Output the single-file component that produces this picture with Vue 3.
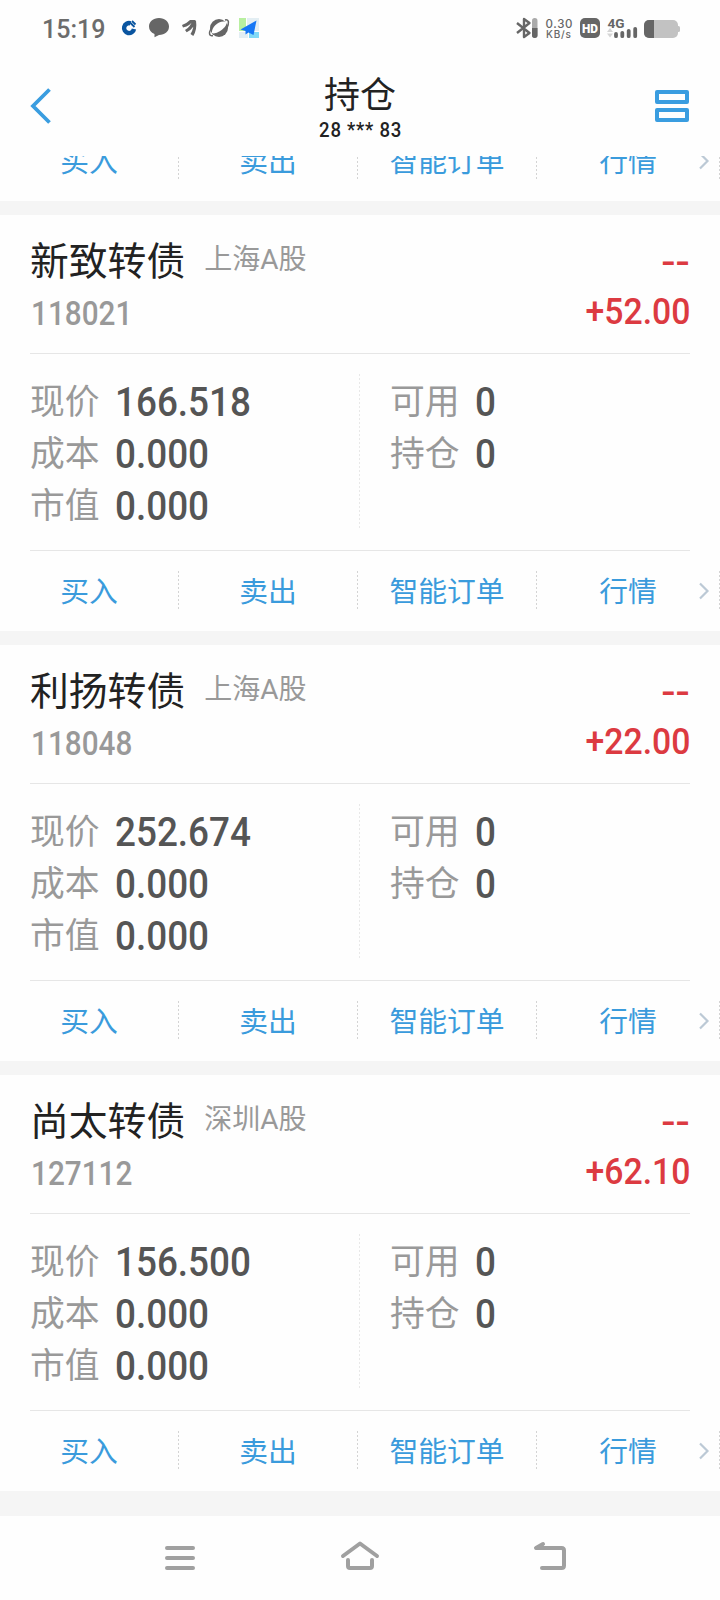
<script setup>
const actions = ['买入', '卖出', '智能订单', '行情']
const holdings = [
  { name: '新致转债', market: '上海A股', code: '118021', profit: '+52.00', price: '166.518' },
  { name: '利扬转债', market: '上海A股', code: '118048', profit: '+22.00', price: '252.674' },
  { name: '尚太转债', market: '深圳A股', code: '127112', profit: '+62.10', price: '156.500' },
]
const cards = [{ id: 'previous' }, ...holdings.map((h) => ({ ...h, id: h.code }))]
</script>

<template>
  <div class="screen">
    <div class="status">
      <span class="clock">15:19</span>
      <svg class="apps" width="150" height="24" viewBox="115 16 150 24">
        <path d="M130.500 23.300A5 5 0 1 0 134 29" fill="none" stroke="#0a55a0" stroke-width="4.400" />
        <path d="M129.500 22l5 5M132 21l3.500 3.500" stroke="#0a55a0" stroke-width="1.800" />
        <path d="M159 18c6 0 10 3.700 10 8.600s-4 8.400-10 8.400l-4.500 2.300v-3.300c-3.500-1.400-5.500-4-5.500-7.400 0-4.900 4-8.600 10-8.600z" fill="#666" />
        <path d="M182 25q4.500-1.500 8-5l3 0q-2.500 6-10 7.500zM185 30q5.500-3 7.500-10l2.500 0q0 8.500-8.300 12.200zM190.500 34q3.500-5 3-13.500l2.500 0q1.300 9-2.700 15.500z" fill="#666" />
        <circle cx="219" cy="28" r="9" fill="#666" />
        <path d="M212 33C211 27 220 19.500 226 22C229 26 216 35.500 212 33z" fill="#fff" />
        <path d="M213 35.500c-4.500 1-4-3-2-7M225 20c4.500-1 4 3.500 2 8" fill="none" stroke="#666" stroke-width="1.500" />
        <path d="M239 18h7v13h-7z" fill="#b8efa0" />
        <path d="M247 18h12v13h-12zM239 32h9v6h-9z" fill="#e3eef3" />
        <path d="M249 32h10v6h-10z" fill="#82d9f6" />
        <path d="M256.500 20.500L240.500 29.500l5 1.500v3.500l3-2 5 2.500z" fill="#1677f5" />
      </svg>
      <svg class="system" width="170" height="24" viewBox="512 16 170 24">
        <path d="M517 23l12.500 10-5.500 4V19l5.500 4L517 33" fill="none" stroke="#666" stroke-width="2.400" stroke-linejoin="round" />
        <rect x="532" y="18" width="5.500" height="20" rx="2.700" fill="#aaa" />
        <path d="M532 28h5.500v7.300a2.700 2.700 0 0 1-5.500 0z" fill="#666" />
        <text x="545.500" y="27.500" class="rate" textLength="27">0.30</text>
        <text x="546" y="37.500" class="unit" textLength="25">KB/s</text>
        <rect x="580" y="18" width="20" height="20" rx="5" fill="#666" />
        <text x="582" y="32.700" class="hd" textLength="16" lengthAdjust="spacingAndGlyphs">HD</text>
        <text x="607.500" y="28" class="net" textLength="17" lengthAdjust="spacingAndGlyphs">4G</text>
        <path d="M607 32l3-4 3 4zM607 33.500l3 4 3-4z" fill="#d5d5d5" />
        <path d="M616 34v2.200M622.300 32.800v3.400M628.700 30.800v5.400M635.200 28.800v7.400" stroke="#666" stroke-width="3.800" stroke-linecap="round" />
        <rect x="644" y="20" width="34" height="18" rx="5" fill="#c2c2c2" />
        <path d="M677 26h1.500q1.500 0 1.500 1.500v3q0 1.500-1.500 1.500h-1.500z" fill="#c2c2c2" />
        <path d="M654 20v18h-5a5 5 0 0 1-5-5v-8a5 5 0 0 1 5-5z" fill="#666" />
      </svg>
    </div>

    <header class="header">
      <svg class="back" width="24" height="40" viewBox="0 0 24 40">
        <path d="M20.500 3.500L4 20 20.500 36.500" fill="none" stroke="#3a9de0" stroke-width="3.800" />
      </svg>
      <div class="heading">
        <h1>持仓</h1>
        <div class="account"><span class="din">28 *** 83</span></div>
      </div>
      <svg class="layout" width="34" height="32" viewBox="0 0 34 32">
        <path d="M2 2h30v10H2zM2 20h30v10H2z" fill="none" stroke="#3a9de0" stroke-width="4" stroke-linejoin="round" />
      </svg>
    </header>

    <main class="list">
      <section v-for="card in cards" :key="card.id" class="card">
        <template v-if="card.code">
          <div class="top">
            <div class="left">
              <div class="name-row">
                <span class="name">{{ card.name }}</span>
                <span class="market">{{ card.market }}</span>
              </div>
              <div class="code"><span class="din">{{ card.code }}</span></div>
            </div>
            <div class="right">
              <div class="rateval"><span class="din end dashes">--</span></div>
              <div class="profit"><span class="din end">{{ card.profit }}</span></div>
            </div>
          </div>
          <div class="body">
            <dl class="col">
              <div><dt>现价</dt><dd class="din">{{ card.price }}</dd></div>
              <div><dt>成本</dt><dd class="din">0.000</dd></div>
              <div><dt>市值</dt><dd class="din">0.000</dd></div>
            </dl>
            <svg class="rule" width="1" height="156"><path d="M.5 0v156" stroke="#e8e8e8" stroke-dasharray="2 2" /></svg>
            <dl class="col second">
              <div><dt>可用</dt><dd class="din">0</dd></div>
              <div><dt>持仓</dt><dd class="din">0</dd></div>
            </dl>
          </div>
        </template>
        <div class="actions">
          <div v-for="a in actions" :key="a" class="action">
            <span>{{ a }}</span>
            <svg v-if="a === '行情'" class="more" width="12" height="20" viewBox="0 0 12 20">
              <path d="M2 2.500L9.500 10 2 17.500" fill="none" stroke="#bcc9d5" stroke-width="2.200" />
            </svg>
            <svg class="tick" width="1" height="38"><path d="M.5 0v38" stroke="#d4d4d4" stroke-dasharray="2 2" /></svg>
          </div>
        </div>
      </section>
    </main>

    <nav class="nav">
      <svg width="720" height="84" viewBox="0 1516 720 84" fill="none" stroke="#a0a0a0" stroke-width="4" stroke-linecap="round" stroke-linejoin="round">
        <path d="M167 1548h26M167 1558h26M167 1568h26" />
        <path d="M343 1556l17-12.500 17 12.500M348 1560v6q0 2 2 2h20q2 0 2-2v-6" />
        <path d="M543 1544l-7 4h25.500q2.500 0 2.500 2.500v15q0 2.500-2.500 2.500h-19.500" />
      </svg>
    </nav>
  </div>
</template>

<style>
body { margin: 0; background: #fff; }
</style>

<style scoped>
.screen {
  width: 720px;
  height: 1600px;
  overflow: hidden;
  display: flex;
  flex-direction: column;
  background: #fefefe;
  font-family: "Noto Sans CJK SC", sans-serif;
}
.din {
  display: inline-block;
  font-family: Roboto, sans-serif;
  transform: scaleX(0.91);
  transform-origin: left center;
  white-space: nowrap;
}
.end { transform: scaleX(0.925); transform-origin: right center; }
.status { height: 56px; flex: none; display: flex; align-items: flex-start; }
.clock {
  width: 74px;
  margin-left: 42px;
  margin-top: 15px;
  font: 500 25px/30px Roboto, sans-serif;
  color: #6c6c6c;
}
.apps { margin-top: 16px; margin-left: -1px; }
.system { margin-top: 16px; margin-left: 247px; }
.rate, .unit { font-family: Inter, sans-serif; font-size: 11.5px; font-weight: 500; fill: #666; }
.unit { font-size: 10px; }
.hd { font: 900 13px Roboto, sans-serif; fill: #fff; }
.net { font: 700 13.5px Roboto, sans-serif; fill: #666; }
.header { height: 100px; flex: none; display: flex; align-items: flex-start; }
.back { margin: 30px 0 0 29px; }
.heading { flex: 1; text-align: center; padding-left: 13px; margin-right: 1px; }
.heading h1 { margin: 11px 0 0; font-size: 36px; line-height: 50px; font-weight: 400; color: #222; }
.account { height: 24px; font-size: 20px; line-height: 24px; color: #222; padding-left: 1px; }
.account .din { transform: scaleX(0.93); transform-origin: center; font-weight: 500; letter-spacing: 0.8px; }
.layout { margin: 34px 31px 0 0; }
.list { height: 1360px; flex: none; overflow: hidden; background: #f5f5f5; display: flex; flex-direction: column; gap: 14px; }
.card { background: #fefefe; flex: none; height: 416px; }
.card:first-child { height: 45px; display: flex; align-items: flex-end; }
.top { height: 138px; margin: 0 30px; border-bottom: 1px solid #e6e6e6; display: flex; justify-content: space-between; }
.name-row { display: flex; align-items: center; height: 54px; margin-top: 16px; }
.name { font-size: 38.800px; line-height: 54px; color: #222; }
.market { margin-left: 19px; margin-top: 4px; font-family: Roboto, "Noto Sans CJK SC", sans-serif; font-size: 28px; line-height: 40px; color: #999; }
.code { height: 36px; margin: 8px 0 0 1px; font-size: 33px; line-height: 36px; color: #999; font-weight: 500; }
.code .din { transform: scaleX(0.9); }
.right { text-align: right; font-size: 36.500px; font-weight: 500; color: #dc3a41; }
.rateval { height: 40px; line-height: 40px; margin-top: 25px; }
.rateval .dashes { transform: scaleX(1.15); }
.profit { height: 40px; line-height: 40px; margin-top: 9px; }
.body { height: 196px; margin: 0 30px; border-bottom: 1px solid #e6e6e6; display: flex; align-items: flex-start; }
.col { margin: 20px 0 0; width: 329px; flex: none; }
.col div { display: flex; height: 52px; align-items: center; }
.col dt { font-size: 34.800px; line-height: 52px; color: #999; width: 85px; margin-top: -3px; flex: none; }
.col dd { margin: 4px 0 0; font-size: 40.500px; line-height: 48px; font-weight: 500; color: #555; }
.col.second { margin-left: 30px; width: 300px; }
.rule { margin-top: 20px; display: block; flex: none; }
.actions { display: flex; height: 80px; width: 720px; }
.action { width: 179px; display: flex; align-items: center; justify-content: center; position: relative; color: #3a9bdc; font-size: 28.800px; line-height: 40px; }
.action:last-child { width: 183px; }
.action span { margin-top: -3px; margin-right: 1px; }
.tick { position: absolute; right: 0; top: 20px; }
.more { position: absolute; right: 10px; top: 30px; }
.nav { height: 84px; flex: none; }
.nav svg { display: block; }
</style>
